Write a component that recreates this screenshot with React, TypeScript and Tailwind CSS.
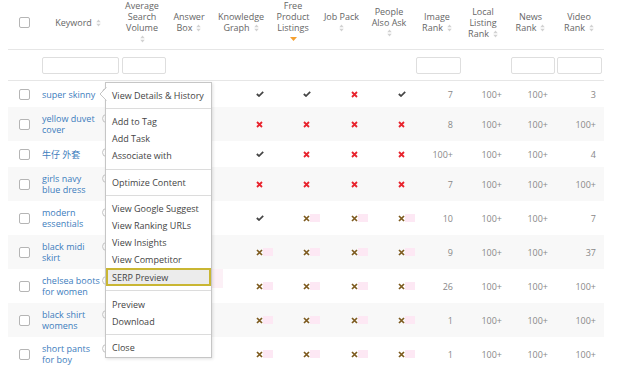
import React from "react";

type Mark = "c" | "r" | "b" | "";

interface Row {
  kw: string[];
  kg: Mark;
  fpl: Mark;
  jp: Mark;
  paa: Mark;
  ir: string;
  llr: string;
  nr: string;
  vr: string;
}

const rows: Row[] = [
  { kw: ["super skinny"], kg: "c", fpl: "c", jp: "r", paa: "c", ir: "7", llr: "100+", nr: "100+", vr: "3" },
  { kw: ["yellow duvet", "cover"], kg: "r", fpl: "r", jp: "r", paa: "r", ir: "8", llr: "100+", nr: "100+", vr: "100+" },
  { kw: ["牛仔 外套"], kg: "c", fpl: "r", jp: "r", paa: "r", ir: "100+", llr: "100+", nr: "100+", vr: "4" },
  { kw: ["girls navy", "blue dress"], kg: "r", fpl: "r", jp: "r", paa: "r", ir: "7", llr: "100+", nr: "100+", vr: "100+" },
  { kw: ["modern", "essentials"], kg: "c", fpl: "b", jp: "b", paa: "b", ir: "10", llr: "100+", nr: "100+", vr: "7" },
  { kw: ["black midi", "skirt"], kg: "b", fpl: "b", jp: "b", paa: "b", ir: "9", llr: "100+", nr: "100+", vr: "37" },
  { kw: ["chelsea boots", "for women"], kg: "b", fpl: "b", jp: "b", paa: "b", ir: "26", llr: "100+", nr: "100+", vr: "100+" },
  { kw: ["black shirt", "womens"], kg: "b", fpl: "b", jp: "b", paa: "b", ir: "1", llr: "100+", nr: "100+", vr: "100+" },
  { kw: ["short pants", "for boy"], kg: "b", fpl: "b", jp: "b", paa: "b", ir: "1", llr: "100+", nr: "100+", vr: "100+" },
];

const GRID =
  "grid grid-cols-[32px_80px_48px_46px_54px_50px_47px_48px_50px_46px_47px_48px] w-[596px]";

function Sort({ inline = true }: { inline?: boolean }) {
  return (
    <svg
      width="5"
      height="8"
      viewBox="0 0 5 8"
      className={inline ? "inline-block ml-[4px] align-[-1px]" : "block"}
    >
      <path d="M2.5 0.5 L4.7 3.2 L0.3 3.2 Z" fill="#d2d2d2" />
      <path d="M2.5 7.5 L4.7 4.8 L0.3 4.8 Z" fill="#d2d2d2" />
    </svg>
  );
}

function Checkbox() {
  return <div className="w-[11px] h-[11px] rounded-[2px] border border-[#b5b5b5] bg-white" />;
}

function Icon({ m }: { m: Mark }) {
  if (m === "c")
    return (
      <svg width="8" height="6" viewBox="0 0 8 6" className="block">
        <path d="M0.8 3 L3 5 L7.2 0.8" stroke="#444" strokeWidth="1.7" fill="none" />
      </svg>
    );
  if (m === "r")
    return (
      <svg width="7" height="7" viewBox="0 0 7 7" className="block">
        <path d="M1 1 L6 6 M6 1 L1 6" stroke="#e8232d" strokeWidth="1.8" fill="none" />
      </svg>
    );
  if (m === "b")
    return (
      <div className="flex items-center">
        <svg width="7" height="7" viewBox="0 0 7 7" className="block">
          <path d="M1 1 L6 6 M6 1 L1 6" stroke="#7d5a1e" strokeWidth="1.7" fill="none" />
        </svg>
        <div className="w-[10px] h-[8px] bg-[#fde8f4]" />
      </div>
    );
  return null;
}

function IconCell({ m, pl }: { m: Mark; pl: string }) {
  return <div className={`flex items-center ${pl}`}>{<Icon m={m} />}</div>;
}

function Num({ v, pr }: { v: string; pr: string }) {
  return <div className={`flex items-center justify-end ${pr} text-[#888]`}>{v}</div>;
}

function Item({ children }: { children: React.ReactNode }) {
  return <div className="h-[17px] flex items-center pl-[6px] whitespace-nowrap">{children}</div>;
}

function Sep() {
  return <div className="h-px bg-[#dcdcdc] my-[4.2px]" />;
}

export default function App() {
  return (
    <div className="relative w-[624px] h-[374px] bg-white overflow-hidden font-['Open_Sans','Noto_Sans_CJK_SC',sans-serif] text-[9px] leading-[11px]">
      <div className="pl-[8px]">
        {/* header */}
        <div className={`${GRID} h-[50px] border-b border-[#e6e6e6] text-[#666] text-center`}>
          <div className="flex items-center justify-center pb-[6px] pl-[1px]">
            <Checkbox />
          </div>
          <div className="flex items-center justify-center pb-[6px] pr-[4px]">
            <div>
              Keyword
              <Sort />
            </div>
          </div>
          <div className="flex flex-col items-center justify-center pb-[6px] pr-[4px]">
            <div>Average</div>
            <div>Search</div>
            <div>Volume</div>
            <div className="h-[11px] flex items-center">
              <Sort inline={false} />
            </div>
          </div>
          <div className="flex flex-col items-center justify-center pb-[6px] pr-[4px]">
            <div>Answer</div>
            <div>
              Box
              <Sort />
            </div>
          </div>
          <div className="flex flex-col items-center justify-center pb-[6px]">
            <div>Knowledge</div>
            <div>
              Graph
              <Sort />
            </div>
          </div>
          <div className="flex flex-col items-center justify-center pb-[6px]">
            <div>Free</div>
            <div>Product</div>
            <div>Listings</div>
            <div className="h-[11px] flex items-center">
              <svg width="7" height="4" viewBox="0 0 7 4" className="block">
                <path d="M0 0 H7 L3.5 4 Z" fill="#f5a030" />
              </svg>
            </div>
          </div>
          <div className="flex flex-col items-center justify-center pb-[6px]">
            <div>Job Pack</div>
            <div className="h-[11px] flex items-center">
              <Sort inline={false} />
            </div>
          </div>
          <div className="flex flex-col items-center justify-center pb-[6px]">
            <div>People</div>
            <div>Also Ask</div>
            <div className="h-[11px] flex items-center">
              <Sort inline={false} />
            </div>
          </div>
          <div className="flex flex-col items-center justify-center pb-[6px] pr-[2px]">
            <div>Image</div>
            <div>
              Rank
              <Sort />
            </div>
          </div>
          <div className="flex flex-col items-center justify-center pb-[6px] pr-[6px]">
            <div>Local</div>
            <div>Listing</div>
            <div>
              Rank
              <Sort />
            </div>
          </div>
          <div className="flex flex-col items-center justify-center pb-[6px] pr-[4px]">
            <div>News</div>
            <div>
              Rank
              <Sort />
            </div>
          </div>
          <div className="flex flex-col items-center justify-center pb-[6px] pr-[2px]">
            <div>Video</div>
            <div>
              Rank
              <Sort />
            </div>
          </div>
        </div>

        {/* filter row */}
        <div className={`${GRID} h-[31px] border-b border-[#e6e6e6] items-center`}>
          <div />
          <div className="pl-[2px] pr-[1px]">
            <div className="h-[17px] rounded-[2px] border border-[#dedede] bg-white" />
          </div>
          <div className="pl-[2px] pr-[2px]">
            <div className="h-[17px] rounded-[2px] border border-[#dedede] bg-white" />
          </div>
          <div />
          <div />
          <div />
          <div />
          <div />
          <div className="pl-[3px] pr-[2px]">
            <div className="h-[17px] rounded-[2px] border border-[#dedede] bg-white" />
          </div>
          <div />
          <div className="pl-[2px] pr-[1px]">
            <div className="h-[17px] rounded-[2px] border border-[#dedede] bg-white" />
          </div>
          <div className="pl-[1px] pr-[2px]">
            <div className="h-[17px] rounded-[2px] border border-[#dedede] bg-white" />
          </div>
        </div>

        {/* rows */}
        {rows.map((r, i) => (
          <div
            key={i}
            className={`${GRID} ${r.kw.length > 1 ? "min-h-[34px]" : "min-h-[26px]"} ${
              i % 2 === 1 ? "bg-[#f8f8f8]" : "bg-white"
            }`}
          >
            <div className="flex items-center justify-center pl-[1px]">
              <Checkbox />
            </div>
            <div className="flex items-center pl-[2px] py-[6px]">
              <div className="w-[60px] text-[#3d7dbd]">
                {r.kw.map((l, j) => (
                  <div key={j} className="whitespace-nowrap">
                    {l}
                  </div>
                ))}
              </div>
              <div className="self-start mt-[1px] w-[9px] h-[9px] rounded-full border border-[#c4c4c4]" />
            </div>
            <div />
            <div className="relative">
              {i === 6 && <div className="absolute left-[44px] top-[0px] w-[11px] h-[19px] bg-[#fcf0f6]" />}
            </div>
            <IconCell m={r.kg} pl="pl-[42px]" />
            <IconCell m={r.fpl} pl="pl-[35px]" />
            <IconCell m={r.jp} pl="pl-[33px]" />
            <IconCell m={r.paa} pl="pl-[33px]" />
            <Num v={r.ir} pr="pr-[10px]" />
            <Num v={r.llr} pr="pr-[7px]" />
            <Num v={r.nr} pr="pr-[8px]" />
            <Num v={r.vr} pr="pr-[8px]" />
          </div>
        ))}
      </div>

      {/* context menu */}
      <div className="absolute left-[105px] top-[82px] w-[107px] bg-white border border-[#c6c6c6] shadow-[1px_1px_3px_rgba(0,0,0,0.12)] pt-[4px] pb-[1px] text-[#444]">
        <svg width="8" height="14" viewBox="0 0 8 14" className="absolute left-[-7px] top-[4px] block">
          <path d="M7.5 0.5 L1 7 L7.5 13.5" stroke="#c6c6c6" strokeWidth="1" fill="#fff" />
        </svg>
        <Item>View Details &amp; History</Item>
        <Sep />
        <Item>Add to Tag</Item>
        <Item>Add Task</Item>
        <Item>Associate with</Item>
        <Sep />
        <Item>Optimize Content</Item>
        <Sep />
        <Item>View Google Suggest</Item>
        <Item>View Ranking URLs</Item>
        <Item>View Insights</Item>
        <Item>View Competitor</Item>
        <div className="h-[18px] flex items-center pl-[4px] border-2 border-[#c9b633] bg-[#ececec] whitespace-nowrap">
          SERP Preview
        </div>
        <Sep />
        <Item>Preview</Item>
        <Item>Download</Item>
        <Sep />
        <Item>Close</Item>
      </div>
    </div>
  );
}
